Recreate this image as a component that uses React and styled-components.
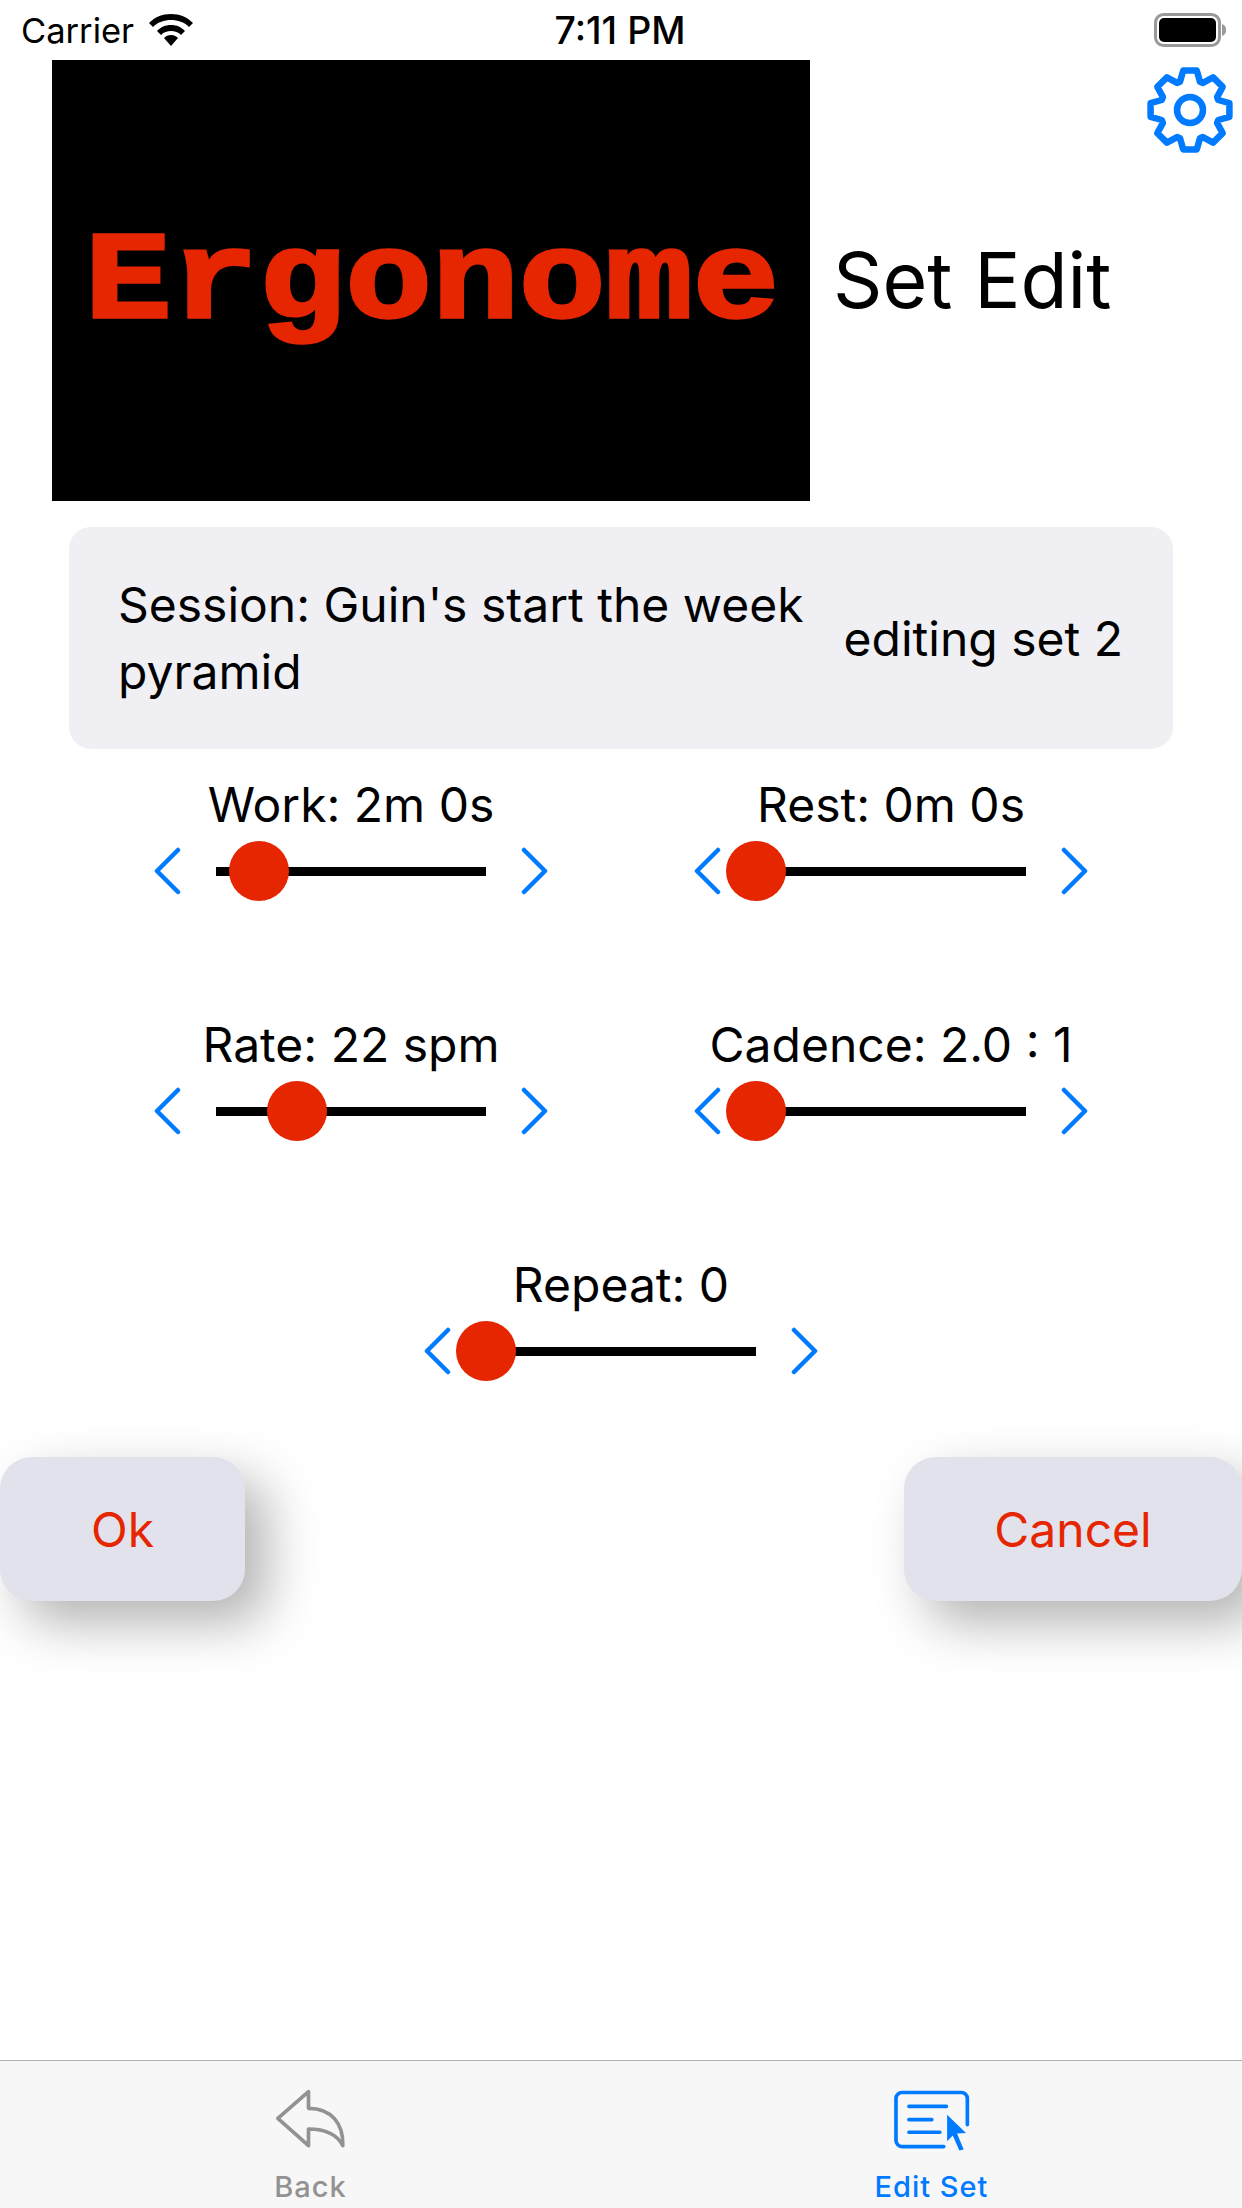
import React from 'react';
import styled, { createGlobalStyle } from 'styled-components';

const Global = createGlobalStyle`
  html, body { margin: 0; padding: 0; background: #fff; }
  body { font-family: Inter, "Liberation Sans", sans-serif; }
`;
const RED = '#E62600';
const BLUE = '#007AFF';

const Page = styled.div`
  width: 1242px; height: 2208px; display: flex; flex-direction: column;
  background: #fff; overflow: hidden; color: #000;
`;
const StatusBar = styled.div`
  height: 60px; flex: none; display: grid; grid-template-columns: 1fr auto 1fr;
  align-items: center; padding: 0 16px 0 21px; box-sizing: border-box; font-size: 34.5px;
`;
const StatusLeft = styled.div`display: flex; align-items: center; gap: 15px;`;
const StatusTime = styled.div`font-weight: 500; font-size: 37.5px; margin-left: -7px;`;
const StatusRight = styled.div`display: flex; justify-content: flex-end;`;
const Header = styled.div`
  height: 441px; flex: none; display: flex; padding-left: 52px; position: relative;
`;
const Logo = styled.div`
  width: 758px; height: 441px; background: #000; box-sizing: border-box; overflow: hidden;
  padding: 142px 0 0 33px;
`;
const LogoText = styled.div`
  color: ${RED}; font: bold 144px/1 "Liberation Mono", monospace; white-space: nowrap;
  letter-spacing: .4px; -webkit-text-stroke: 4px ${RED}; paint-order: stroke fill;
  transform: scaleY(.86); transform-origin: 0 100%;
`;
const Title = styled.h1`
  margin: 0 0 0 23px; font-size: 77px; font-weight: 400; line-height: 1; padding-top: 182px;
`;
const Gear = styled.svg`position: absolute; right: 8px; top: 6px;`;
const Card = styled.div`
  margin: 26px 69px 0; height: 222px; flex: none; box-sizing: border-box; background: #EFEFF4;
  border-radius: 22px; padding: 0 50px 0 49px; display: flex; align-items: center;
  justify-content: space-between; font-size: 48px; line-height: 67px;
`;
const Session = styled.div`width: 700px;`;
const Controls = styled.div`
  display: grid; grid-template-columns: 540px 540px; padding: 26px 0 0 81px; row-gap: 114px; flex: none;
`;
const Control = styled.div`
  display: flex; flex-direction: column; align-items: center;
  grid-column: ${p => (p.$wide ? '1 / span 2' : 'auto')};
`;
const Label = styled.div`font-size: 48px; line-height: 60px; white-space: nowrap;`;
const SliderRow = styled.div`
  display: flex; align-items: center; width: 396px; height: 60px; margin-top: 6px;
  justify-content: space-between;
`;
const Track = styled.div`
  width: 270px; height: 9px; background: #000; position: relative;
`;
const Thumb = styled.div`
  position: absolute; top: 50%; width: 60px; height: 60px; border-radius: 50%; background: ${RED};
  transform: translate(-50%, -50%);
`;
const Buttons = styled.div`display: flex; justify-content: space-between; margin-top: 76px; flex: none;`;
const Button = styled.div`
  width: ${p => p.$w}px; height: 144px; background: #E1E2EC; border-radius: 32px; color: ${RED};
  display: flex; align-items: center; justify-content: center; font-size: 48px;
  box-shadow: 22px 22px 52px rgba(0,0,0,.3);
`;
const TabBar = styled.div`
  margin-top: auto; height: 148px; flex: none; box-sizing: border-box; display: flex;
  background: #F7F7F7; border-top: 1px solid #B2B2B2;
`;
const Tab = styled.div`
  flex: 1; display: flex; flex-direction: column; align-items: center; padding-top: 28px;
  color: ${p => (p.$active ? BLUE : '#929292')};
`;
const IconSlot = styled.div`height: 64px; display: flex; align-items: flex-start;`;
const TabLabel = styled.div`font-size: 29px; font-weight: 500; line-height: 34px; margin-top: 17px; letter-spacing: 1px;`;

const Chevron = ({ dir }) => (
  <svg width="28" height="48" viewBox="0 0 28 48" fill="none" stroke={BLUE} strokeWidth="4.5" strokeLinecap="round" strokeLinejoin="round">
    <path d={dir === 'left' ? 'M25 3 L4 24 L25 45' : 'M3 3 L24 24 L3 45'} />
  </svg>
);

const Slider = ({ label, pos, wide }) => (
  <Control $wide={wide}>
    <Label>{label}</Label>
    <SliderRow>
      <Chevron dir="left" />
      <Track><Thumb style={{ left: `${pos}%` }} /></Track>
      <Chevron dir="right" />
    </SliderRow>
  </Control>
);

function gearPath() {
  const cx = 44, cy = 44, n = 8, R = 40, r = 30;
  const pts = [];
  for (let i = 0; i < n; i++) {
    const a = (i * 2 * Math.PI) / n - Math.PI / 2;
    const add = (rad, off) => {
      const t = a + off;
      pts.push(`${(cx + rad * Math.cos(t)).toFixed(2)} ${(cy + rad * Math.sin(t)).toFixed(2)}`);
    };
    add(r, -0.34); add(R, -0.17); add(R, 0.17); add(r, 0.34);
  }
  return `M${pts.join(' L')} Z`;
}

export default function App() {
  return (
    <Page>
      <Global />
      <StatusBar>
        <StatusLeft>
          Carrier
          <svg width="44" height="32" viewBox="0 0 44 32" fill="#000">
            <path d="M22 0 C13 0 6 3 0 9 L4 13 C9 8 15 6 22 6 C29 6 35 8 40 13 L44 9 C38 3 31 0 22 0Z" />
            <path d="M22 11 C16 11 12 13 8 17 L12 21 C15 18 18 17 22 17 C26 17 29 18 32 21 L36 17 C32 13 28 11 22 11Z" />
            <path d="M22 21 C19 21 17 22 15 24 L22 32 L29 24 C27 22 25 21 22 21Z" />
          </svg>
        </StatusLeft>
        <StatusTime>7:11 PM</StatusTime>
        <StatusRight>
          <svg width="72" height="34" viewBox="0 0 72 34">
            <rect x="1.5" y="1.5" width="64" height="31" rx="8" fill="none" stroke="#999" strokeWidth="3" />
            <rect x="5" y="5" width="57" height="24" rx="5" fill="#000" />
            <path d="M68 11 C71 12 72 14 72 17 C72 20 71 22 68 23Z" fill="#999" />
          </svg>
        </StatusRight>
      </StatusBar>
      <Header>
        <Logo><LogoText>Ergonome</LogoText></Logo>
        <Title>Set Edit</Title>
        <Gear width="88" height="88" viewBox="0 0 88 88" fill="none" stroke={BLUE} strokeWidth="6.5" strokeLinejoin="round">
          <path d={gearPath()} />
          <circle cx="44" cy="44" r="13" />
        </Gear>
      </Header>
      <Card>
        <Session>Session: Guin's start the week pyramid</Session>
        <div>editing set 2</div>
      </Card>
      <Controls>
        <Slider label="Work: 2m 0s" pos={16} />
        <Slider label="Rest: 0m 0s" pos={0} />
        <Slider label="Rate: 22 spm" pos={30} />
        <Slider label="Cadence: 2.0 : 1" pos={0} />
        <Slider label="Repeat: 0" pos={0} wide />
      </Controls>
      <Buttons>
        <Button $w={245}>Ok</Button>
        <Button $w={338}>Cancel</Button>
      </Buttons>
      <TabBar>
        <Tab>
          <IconSlot>
            <svg width="72" height="60" viewBox="100 120 215 180" fill="none" stroke="currentColor" strokeWidth="11" strokeLinejoin="round" strokeLinecap="round">
              <path d="M108 208 L200 128 V178 C270 178 305 225 303 290 C285 255 250 240 200 240 V290 Z" />
            </svg>
          </IconSlot>
          <TabLabel>Back</TabLabel>
        </Tab>
        <Tab $active>
          <IconSlot>
            <svg width="78" height="64" viewBox="125 118 235 192" fill="none" stroke="currentColor" strokeWidth="11" strokeLinecap="round">
              <path d="M278 291 H152 a18 18 0 0 1 -18 -18 V146 a18 18 0 0 1 18 -18 H331 a18 18 0 0 1 18 18 V225" />
              <path d="M173 170 H286 M173 210 H242 M173 248 H266" />
              <path d="M288 195 L345 250 L318 252 L338 300 L325 303 L305 258 L288 275 Z" fill="currentColor" stroke="none" />
            </svg>
          </IconSlot>
          <TabLabel>Edit Set</TabLabel>
        </Tab>
      </TabBar>
    </Page>
  );
}
